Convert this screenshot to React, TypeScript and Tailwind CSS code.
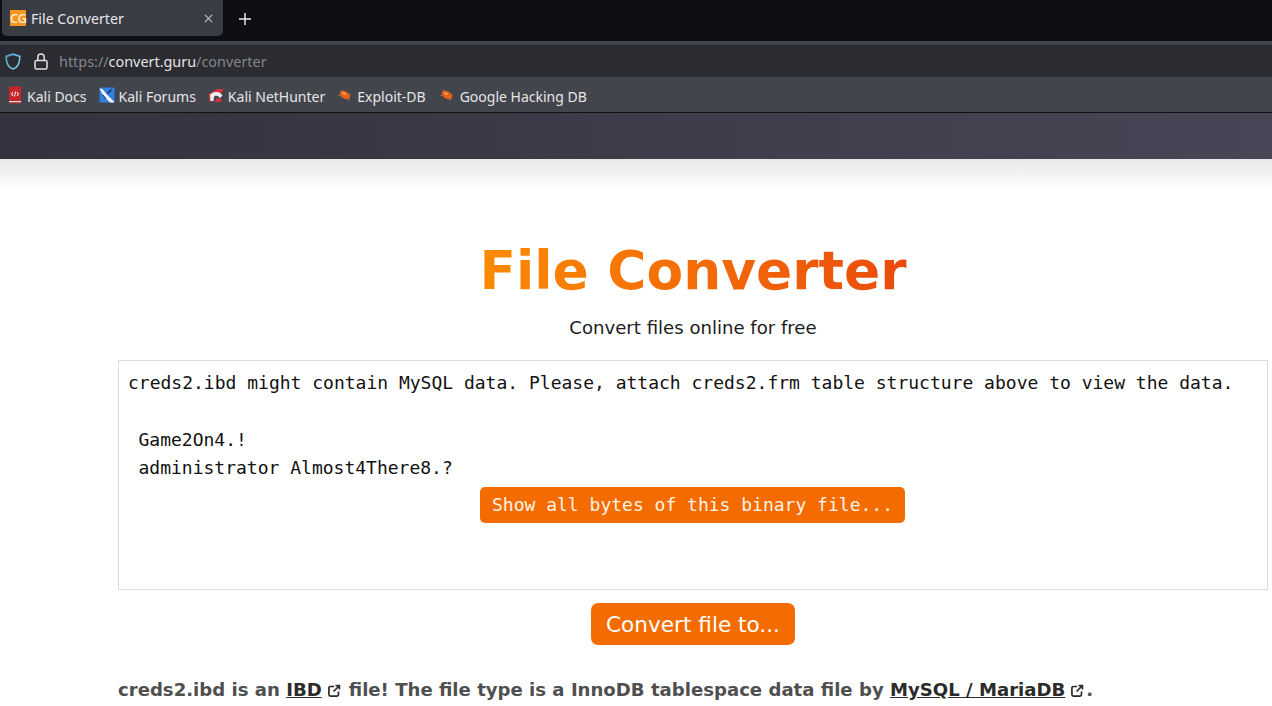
import React from "react";

const Ext = ({ after }: { after: string }) => (
  <svg viewBox="0 0 14 14" className={`inline-block w-[14px] h-[14px] align-[-2px] ml-[5px] ${after}`} fill="none" stroke="#2b2b2b" strokeWidth="1.700">
    <path d="M7 2.500H3.500a1.600 1.600 0 0 0-1.600 1.600v6.400a1.600 1.600 0 0 0 1.600 1.600h6.400a1.600 1.600 0 0 0 1.600-1.600V7.500" />
    <path d="M6.500 7.500L12 2M8.500 1.600h3.900v3.900" />
  </svg>
);

const Bug = () => (
  <svg viewBox="0 0 16 16" className="w-[15px] h-[15px] shrink-0">
    <ellipse cx="8.500" cy="8.500" rx="6" ry="3.800" transform="rotate(32 8.500 8.500)" fill="#e8621a" />
    <path d="M1 9.500l3-1M5 2.500l1.500 2.500M12 14.500l.5-3M15 8l-2 .5" stroke="#b96a45" strokeWidth="1" />
    <ellipse cx="7.500" cy="7" rx="2.200" ry="1.200" transform="rotate(32 7.500 7)" fill="#f59a5c" />
  </svg>
);

const Docs = () => (
  <svg viewBox="0 0 14 18" className="w-[14px] h-[18px] shrink-0">
    <rect x="1" y="0.500" width="12" height="14.500" fill="#c8242c" />
    <rect x="1" y="15" width="12" height="1.500" fill="#f0d6d6" />
    <rect x="1" y="16.500" width="12" height="1" fill="#c8242c" />
    <path d="M5 6L3.500 8 5 10M9 6l1.500 2L9 10M7.600 5.500L6.400 10.500" stroke="#fff" strokeWidth="1" fill="none" />
  </svg>
);

const Forums = () => (
  <svg viewBox="0 0 16 16" className="w-[16px] h-[16px] shrink-0">
    <rect x="0.500" y="0.500" width="15" height="15" rx="1" fill="#2f80e0" />
    <path d="M0.500 1.500l3 .5 4 5 3 3 4.500 4.500v1h-4L6.500 11 3 6.500z" fill="#f2f2f2" />
    <path d="M8.500 6.500L12.500 2.500" stroke="#16305c" strokeWidth="1.500" />
    <path d="M4 8L7 12" stroke="#16305c" strokeWidth="1" />
  </svg>
);

const Hunter = () => (
  <svg viewBox="0 0 16 16" className="w-[16px] h-[16px] shrink-0">
    <path d="M0.500 7L9 2h6.500L13 7 9 6 5.500 8 4 14.500H1.500z" fill="#d5323c" />
    <path d="M2 8c1-2 4-3.500 7-3 3 .5 5 2 5.500 3.500L12 11C10 8.500 7 8 6 10l-.5 4H2.500z" fill="#ececec" />
    <path d="M7 15c0-3 2-4.500 4-4l3.500 3-3 1z" fill="#d5323c" />
  </svg>
);

const Bookmark = ({ icon, label, gap }: { icon: React.ReactNode; label: string; gap: string }) => (
  <div className={`flex items-center ${gap}`}>
    {icon}
    <span className="relative top-[2px]">{label}</span>
  </div>
);

export default function App() {
  return (
    <div className="h-[706px] w-[1272px] overflow-hidden flex flex-col bg-white font-['DejaVu_Sans',sans-serif]">
      {/* Tab strip */}
      <div className="h-[41px] bg-[#0e0f15] flex items-start pl-[2px] font-['Noto_Sans',sans-serif]">
        <div className="w-[221px] h-[36px] bg-[#3a3c44] rounded-b-[5px] flex items-center pl-[8px] pr-[10px] text-[14.200px] text-[#e6e6e8]">
          <div className="w-[16px] h-[16px] bg-[#f7941d] text-[#fff2dc] text-[13px] font-medium leading-[16px] text-center tracking-[-0.500px] font-['Noto_Sans',sans-serif]">CG</div>
          <span className="ml-[5px] flex-1 relative top-[1px]">File Converter</span>
          <svg viewBox="0 0 10 10" className="w-[9px] h-[9px]" stroke="#c4c5c9" strokeWidth="1.200">
            <path d="M1 1l8 8M9 1l-8 8" />
          </svg>
        </div>
        <svg viewBox="0 0 12 12" className="w-[12px] h-[12px] ml-[16px] mt-[13px]" stroke="#f0f0f2" strokeWidth="1.400">
          <path d="M6 0v12M0 6h12" />
        </svg>
      </div>
      {/* Toolbar */}
      <div className="h-[36px] bg-[#2b2c32] border-t-[4px] border-[#43454c] flex items-center pl-[5px] text-[14.400px] font-['Noto_Sans',sans-serif]">
        <svg viewBox="1 1 14 14.500" className="w-[16px] h-[17px]" fill="none" strokeWidth="1.400">
          <defs>
            <linearGradient id="sh" x1="0" y1="0" x2="1" y2="1">
              <stop offset="0" stopColor="#5aa2d8" />
              <stop offset="1" stopColor="#7cd6e4" />
            </linearGradient>
          </defs>
          <path d="M8 1.800l6 2c0 5-1 9.500-6 11-5-1.500-6-6-6-11z" stroke="url(#sh)" />
        </svg>
        <svg viewBox="0 0 14 17" className="w-[14px] h-[17px] ml-[13px]" fill="none" stroke="#e2e2e4" strokeWidth="1.500">
          <path d="M3.800 7.500V4.300a3.200 3.200 0 0 1 6.400 0v3.200" />
          <rect x="1" y="7.500" width="12" height="8.500" rx="1.500" />
        </svg>
        <span className="ml-[11px] relative top-[1px] text-[#85868b]">
          https://<span className="text-[#e4e4e6]">convert.guru</span>/converter
        </span>
      </div>
      {/* Bookmarks */}
      <div className="h-[36px] bg-[#43454c] border-b border-[#101015] flex items-center pl-[8px] text-[14px] text-[#e6e6e8] font-['Noto_Sans',sans-serif]">
        <Bookmark icon={<Docs />} label="Kali Docs" gap="gap-[5px]" />
        <div className="w-[12px]" />
        <Bookmark icon={<Forums />} label="Kali Forums" gap="gap-[4px]" />
        <div className="w-[12px]" />
        <Bookmark icon={<Hunter />} label="Kali NetHunter" gap="gap-[4px]" />
        <div className="w-[12px]" />
        <Bookmark icon={<Bug />} label="Exploit-DB" gap="gap-[5px]" />
        <div className="w-[13px]" />
        <Bookmark icon={<Bug />} label="Google Hacking DB" gap="gap-[6px]" />
      </div>
      {/* Site header */}
      <div className="relative h-[46px] shrink-0 bg-gradient-to-r from-[#32333e] to-[#474656]">
        <div className="absolute left-0 right-0 top-[46px] h-[32px] bg-gradient-to-b from-[#e8e8e8] to-white" />
      </div>
      {/* Page */}
      <div className="relative flex-1 pl-[118px] pr-[4px] flex flex-col items-stretch">
        <h1 className="mt-[75px] text-center text-[53.400px] leading-[74px] font-bold bg-gradient-to-r from-[#fb8a00] to-[#ea4a0c] bg-clip-text text-transparent w-fit self-center">
          File Converter
        </h1>
        <p className="mt-[6px] text-center text-[18.100px] leading-[27px] text-[#1c1c1c]">Convert files online for free</p>
        <div className="mt-[19px] h-[230px] border border-[#dcdcdc] pl-[9px] pr-[10px] pt-[8px] text-[18px] leading-[28px] text-[#111] font-['DejaVu_Sans_Mono',monospace] flex flex-col">
          <div className="whitespace-nowrap">creds2.ibd might contain MySQL data. Please, attach creds2.frm table structure above to view the data.</div>
          <div className="mt-[29px] pl-[10.500px]">Game2On4.!</div>
          <div className="pl-[10.500px]">administrator Almost4There8.?</div>
          <button className="self-center mt-[5px] h-[36px] px-[12px] rounded-[5px] bg-[#f46c00] text-[#fff3e6]">
            Show all bytes of this binary file...
          </button>
        </div>
        <button className="self-center mt-[13px] h-[42px] px-[15px] pt-[2px] rounded-[7px] bg-[#f46c00] text-white text-[21.600px]">
          Convert file to...
        </button>
        <p className="mt-[31px] text-[18.100px] leading-[27px] font-bold text-[#4f4f4f] whitespace-nowrap">
          creds2.ibd is an <span className="text-[#2b2b2b] underline">IBD</span>
          <Ext after="mr-[8px]" />file! The file type is a InnoDB tablespace data file by{" "}
          <span className="text-[#2b2b2b] underline">MySQL / MariaDB</span>
          <Ext after="mr-[2px]" />.
        </p>
      </div>
    </div>
  );
}
